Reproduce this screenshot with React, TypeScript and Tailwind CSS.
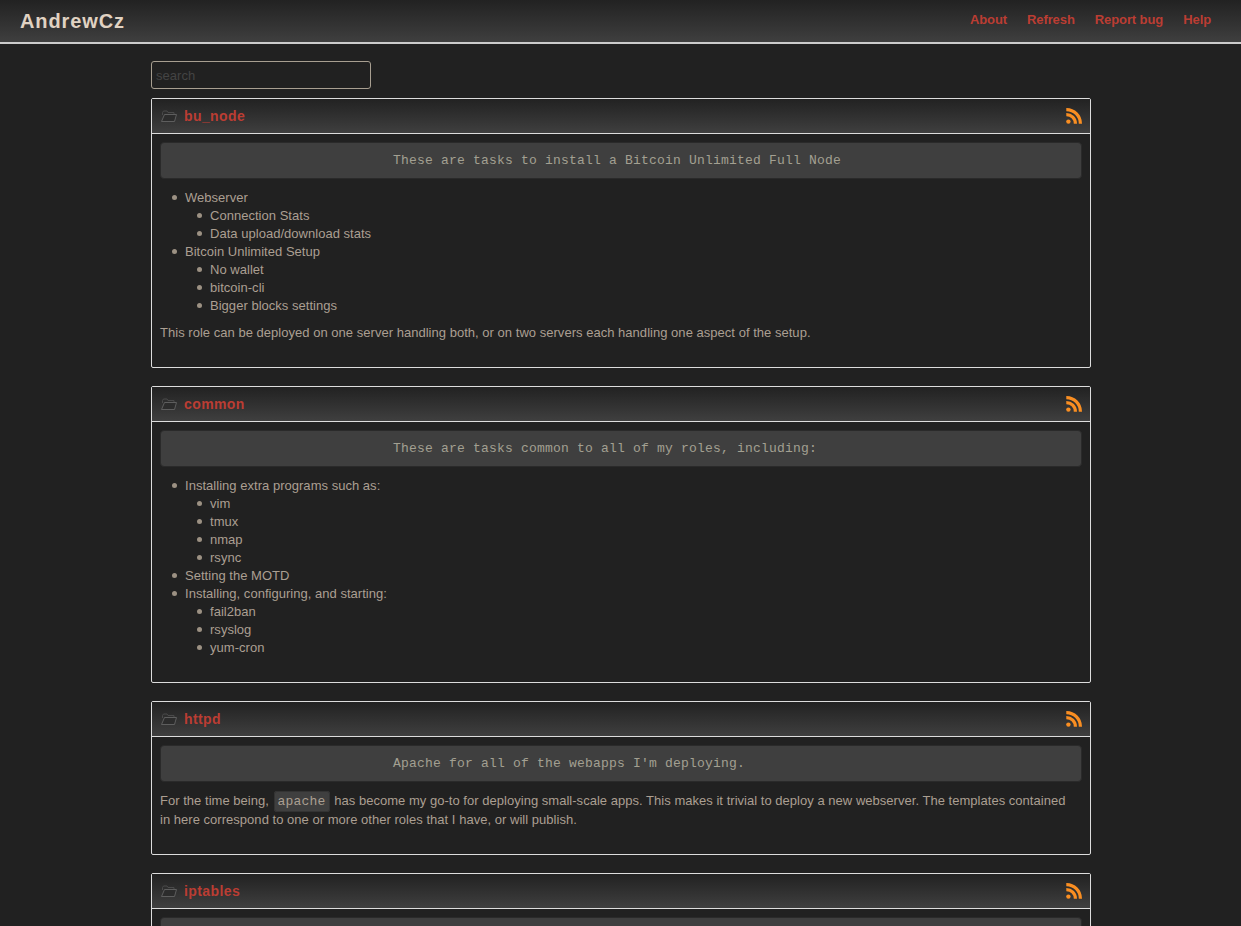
import type { ReactNode } from 'react';

type Item = { text: string; children?: string[] };

type Role = {
  name: string;
  summary: string;
  items?: Item[];
  note?: ReactNode;
};

const roles: Role[] = [
  {
    name: 'bu_node',
    summary: 'These are tasks to install a Bitcoin Unlimited Full Node',
    items: [
      { text: 'Webserver', children: ['Connection Stats', 'Data upload/download stats'] },
      { text: 'Bitcoin Unlimited Setup', children: ['No wallet', 'bitcoin-cli', 'Bigger blocks settings'] },
    ],
    note: 'This role can be deployed on one server handling both, or on two servers each handling one aspect of the setup.',
  },
  {
    name: 'common',
    summary: 'These are tasks common to all of my roles, including:',
    items: [
      { text: 'Installing extra programs such as:', children: ['vim', 'tmux', 'nmap', 'rsync'] },
      { text: 'Setting the MOTD' },
      { text: 'Installing, configuring, and starting:', children: ['fail2ban', 'rsyslog', 'yum-cron'] },
    ],
  },
  {
    name: 'httpd',
    summary: "Apache for all of the webapps I'm deploying.",
    note: (
      <>
        For the time being,{' '}
        <code className="mx-[1px] rounded-[3px] border border-[#333] bg-[#3f3f3f] px-[3px] py-[2px] font-['Liberation_Mono',monospace] text-[13px] tracking-[0.2px]">apache</code>{' '}
        has become my go-to for deploying small-scale apps. This makes it trivial to deploy a new webserver. The templates contained
        <br />
        in here correspond to one or more other roles that I have, or will publish.
      </>
    ),
  },
  { name: 'iptables', summary: '\u00a0' },
];

const FolderIcon = () => (
  <svg viewBox="0 0 16 12" className="ml-[1px] h-[12px] w-[16px]" fill="none">
    <path d="M1.5 5V2.5L2.5 1H6L7 2.5H13V4" stroke="#4a4a4a" />
    <path d="M3.5 4.5H15.5L13.5 11.5H.5Z" stroke="#5e5e5e" fill="#2c2c2c" />
  </svg>
);

const RssIcon = () => (
  <svg viewBox="0 0 16 16" className="ml-auto h-[16px] w-[16px]" fill="none" stroke="#f98e22" strokeWidth="3.2">
    <circle cx="2.4" cy="13.6" r="2.2" fill="#f98e22" stroke="none" />
    <path d="M.3 6.6A9 9 0 0 1 9.4 15.7" />
    <path d="M.3 1.6A14 14 0 0 1 14.4 15.7" />
  </svg>
);

const bullet =
  'relative before:absolute before:left-[-13px] before:top-[6px] before:h-[5px] before:w-[5px] before:rounded-full before:bg-[#9c9183]';

const RolePanel = ({ role }: { role: Role }) => (
  <section className="rounded-[2px] border border-[#ddd] bg-[#212121]">
    <header className="flex h-[35px] items-center border-b border-[#ddd] bg-gradient-to-b from-[#222] to-[#3f3f3f] pl-[8px] pr-[8px]">
      <FolderIcon />
      <a className="ml-[7px] text-[14px] font-bold tracking-[0.4px] text-[#bb3d33]">{role.name}</a>
      <RssIcon />
    </header>
    <div className="px-[8px] pb-[25px] pt-[8px]">
      <pre className="h-[37px] rounded-[4px] border border-[#2a2a2a] bg-[#3f3f3f] pl-[232px] font-['Liberation_Mono',monospace] text-[13px] leading-[35px] tracking-[0.2px] text-[#a3a092]">
        {role.summary}
      </pre>
      {role.items && (
        <ul className="mt-[10px] pl-[25px]">
          {role.items.map((item) => (
            <li key={item.text} className={bullet}>
              {item.text}
              {item.children && (
                <ul className="pl-[25px]">
                  {item.children.map((child) => (
                    <li key={child} className={bullet}>
                      {child}
                    </li>
                  ))}
                </ul>
              )}
            </li>
          ))}
        </ul>
      )}
      {role.note && <p className={role.items ? 'mt-[9px]' : 'mt-[10px]'}>{role.note}</p>}
    </div>
  </section>
);

export default function App() {
  return (
    <div className="h-screen overflow-hidden bg-[#212121] font-['Liberation_Sans',Arial,sans-serif] text-[13px] leading-[18px] tracking-[0.027px] text-[#ab9f92]">
      {/* Navbar */}
      <nav className="flex h-[44px] items-center justify-between border-b-2 border-[#ccc] bg-gradient-to-b from-[#222] to-[#3f3f3f] pl-[20px] pr-[30px]">
        <a className="text-[20px] font-bold tracking-[0.9px] text-[#e0d2c2]">AndrewCz</a>
        <div className="flex gap-[20px] pb-[2px] text-[13px] font-bold tracking-[-0.09px] text-[#bb3d33]">
          <a>About</a>
          <a>Refresh</a>
          <a>Report bug</a>
          <a>Help</a>
        </div>
      </nav>

      <main className="ml-[151px] w-[940px] pt-[17px]">
        <input
          placeholder="search"
          className="mb-[9px] block h-[28px] w-[220px] rounded-[3px] border border-[#a89f91] bg-[#212121] px-[4px] text-[13px] outline-none placeholder:text-[#444]"
        />
        <div className="flex flex-col gap-[18px]">
          {roles.map((role) => (
            <RolePanel key={role.name} role={role} />
          ))}
        </div>
      </main>
    </div>
  );
}
